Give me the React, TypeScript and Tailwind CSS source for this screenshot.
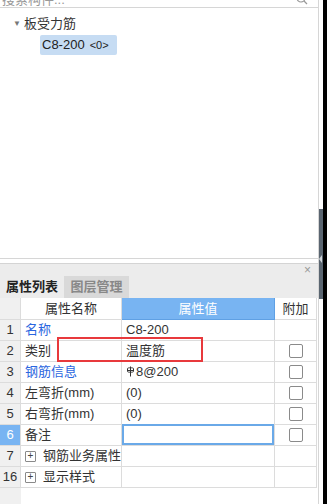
import React from 'react';

const font = { fontFamily: '"Liberation Sans", "Noto Sans CJK SC", sans-serif' };

const Rebar = () => (
  <svg width="9" height="11" viewBox="0 0 9 11" className="inline-block mr-[1px] -mt-[2px]">
    <path d="M4.5 0.5v10M1 4.5h7M1.5 2.5c0 -1 6 -1 6 0v3c0 1 -6 1 -6 0z" stroke="#333" strokeWidth="1" fill="none" />
  </svg>
);

const Check = () => (
  <div className="w-[14px] h-[14px] border border-[#8a8a8a] rounded-[2px] bg-white" />
);

const Plus = () => (
  <span className="inline-flex shrink-0 items-center justify-center w-[11px] h-[11px] border border-[#8a8a8a] rounded-[1px] text-[10px] leading-none text-[#444] mr-[7px]">+</span>
);

type Row = { n: string; name: React.ReactNode; value?: React.ReactNode; check?: boolean; blue?: boolean; active?: boolean; group?: boolean };

const rows: Row[] = [
  { n: '1', name: '名称', value: 'C8-200', blue: true },
  { n: '2', name: '类别', value: '温度筋', check: true },
  { n: '3', name: '钢筋信息', value: <><Rebar />8@200</>, check: true, blue: true },
  { n: '4', name: '左弯折(mm)', value: '(0)', check: true },
  { n: '5', name: '右弯折(mm)', value: '(0)', check: true },
  { n: '6', name: '备注', value: '', check: true, active: true },
  { n: '7', name: '钢筋业务属性', group: true },
  { n: '16', name: '显示样式', group: true },
];

export default function App() {
  return (
    <div className="w-[327px] h-[504px] flex bg-white text-[13px] text-[#333] overflow-hidden" style={font}>
      <div className="w-[319px] h-full flex flex-col border-r border-[#d6d6d6]">
        {/* search */}
        <div className="h-[8px] overflow-hidden border-b border-[#d6d6d6] flex justify-between pl-[2px] pr-[10px]">
          <span className="text-[#999] -mt-[10px]">搜索构件...</span>
          <svg width="12" height="12" viewBox="0 0 12 12" className="-mt-[7px]">
            <circle cx="5" cy="5" r="4" stroke="#999" fill="none" strokeWidth="1.2" />
            <path d="M8 8l3 3" stroke="#999" strokeWidth="1.2" />
          </svg>
        </div>
        {/* tree */}
        <div className="h-[251px] border-b border-[#d6d6d6] pt-[7px]">
          <div className="flex items-center h-[18px] pl-[13px]">
            <span className="text-[8px] text-[#777] mr-[3px]">▼</span>
            <span>板受力筋</span>
          </div>
          <div className="mt-[2px] ml-[40px] w-[77px] h-[20px] rounded-[2px] bg-[#c6dcf3] flex items-center pl-[2px] text-[#222]">
            C8-200 <span className="ml-[5px] text-[11px]">&lt;0&gt;</span>
          </div>
        </div>
        {/* panel bar */}
        <div className="mt-[4px] h-[13px] bg-[#ececec] border-t border-[#d4d4d4] flex justify-end items-center pr-[7px]">
          <span className="text-[#999] text-[12px] leading-none">×</span>
        </div>
        {/* tabs */}
        <div className="h-[22px] bg-[#ececec] flex">
          <div className="w-[64px] flex items-center justify-center font-bold text-[#222]">属性列表</div>
          <div className="w-[65px] flex items-center justify-center bg-[#d9d9d9] text-[#888] font-bold">图层管理</div>
        </div>
        {/* table */}
        <div className="flex-1 relative bg-white">
          <div className="absolute left-0 top-0 bottom-0 w-[21px] bg-[#f0f0f0]" />
          <div className="relative w-[317px] grid grid-cols-[21px_101px_153px_41px] border-r border-[#dcdcdc]">
            <div className="h-[22px] bg-[#f0f0f0] border-r border-b border-[#dcdcdc]" />
            <div className="h-[22px] flex items-center justify-center border-r border-b border-[#dcdcdc]">属性名称</div>
            <div className="h-[22px] flex items-center justify-center bg-[#78b4f2] text-white border-r border-b border-[#5fa0e4]">属性值</div>
            <div className="h-[22px] flex items-center justify-center border-b border-[#dcdcdc]">附加</div>
            {rows.map((r) => (
              <React.Fragment key={r.n}>
                <div className={`h-[21px] flex items-center justify-center border-r border-b border-[#dcdcdc] ${r.active ? 'bg-[#78b4f2] text-white' : 'bg-[#f0f0f0]'}`}>{r.n}</div>
                <div className={`h-[21px] flex items-center pl-[4px] border-r border-b border-[#dcdcdc] whitespace-nowrap overflow-hidden ${r.blue ? 'text-[#2a66e0]' : ''}`}>
                  {r.group && <Plus />}
                  {r.name}
                </div>
                <div className="h-[21px] border-r border-b border-[#dcdcdc] relative">
                  {r.active ? (
                    <div className="absolute inset-0 border-2 border-[#6aa9e8] -mt-[1px]" />
                  ) : (
                    <div className="h-full flex items-center pl-[4px]">{r.value}</div>
                  )}
                </div>
                <div className="h-[21px] flex items-center justify-center border-b border-[#dcdcdc]">
                  {r.check && <Check />}
                </div>
              </React.Fragment>
            ))}
          </div>
          {/* highlight marker */}
          <div className="absolute left-[57px] top-[39px] w-[146px] h-[25px] border-2 border-[#e8393c]" />
        </div>
      </div>
      {/* splitter */}
      <div className="w-[4px] h-full flex flex-col">
        <div className="h-[209px]" />
        <div className="h-[90px] bg-[#5a6570] relative">
          <div className="absolute left-0 top-[46px] w-0 h-0 border-y-[4px] border-y-transparent border-r-[3px] border-r-[#cfd4d8]" />
        </div>
      </div>
      <div className="flex-1 bg-black" />
    </div>
  );
}
